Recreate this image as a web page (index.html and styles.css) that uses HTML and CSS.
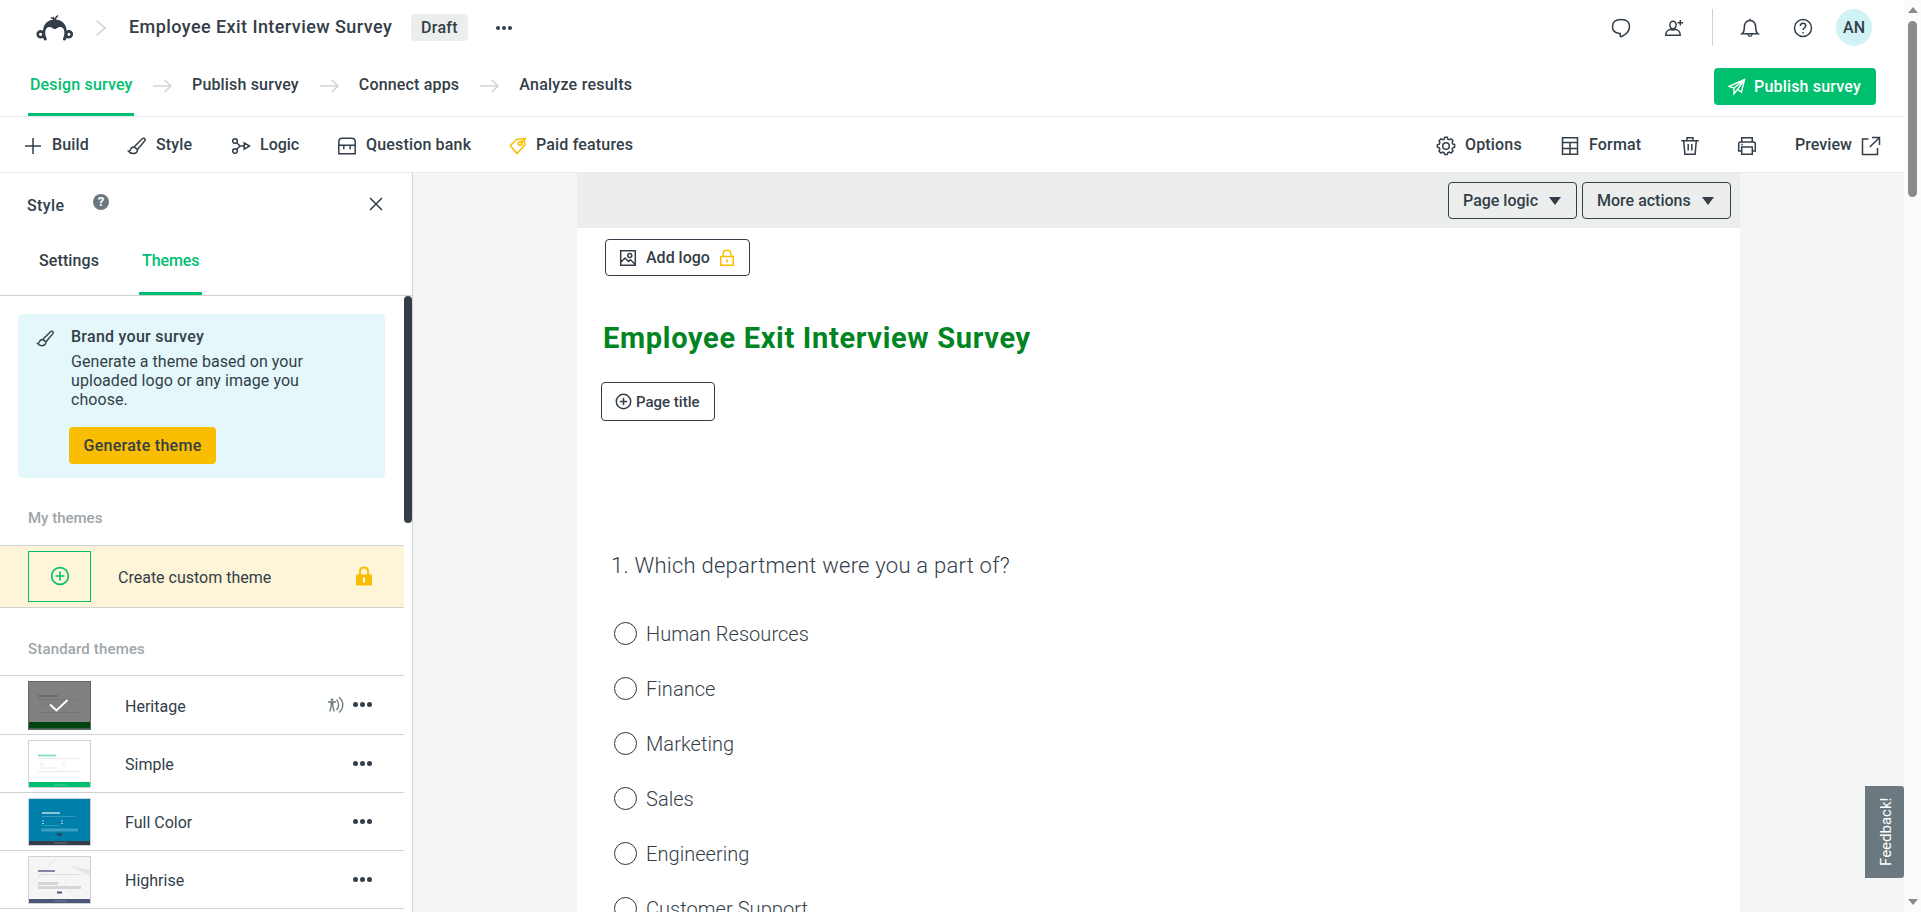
FILE: index.html
```
<!DOCTYPE html>
<html lang="en">

<head>
    <meta charset="UTF-8" />
    <meta name="viewport" content="width=device-width, initial-scale=1.0" />
    <title>Employee Exit Interview Survey</title>
    <link rel="stylesheet" href="styles.css">
</head>

<body>
    <div class="app">
        <header class="topbar">
            <svg class="logo" width="38" height="26" viewBox="0 0 38 26">
                <circle cx="4.600" cy="19.300" r="2.900" fill="none" stroke="#333e48" stroke-width="2.600" />
                <circle cx="32.900" cy="19.300" r="2.900" fill="none" stroke="#333e48" stroke-width="2.600" />
                <path d="M18.800 4.500C12 4.500 7.500 9 7 15.500l-1 6.500c1.200.8 1.800 2 2 3 .5.700 2.500.6 2.700-.5.200-1-.8-2.800-1.200-4.300C8.500 15.500 10.500 12 13.500 12c2.200 0 3.700 2.200 5.300 2.200S22 12 24.200 12c3 0 5 3.500 4 8.200-.4 1.500-1.400 3.300-1.200 4.300.2 1.100 2.200 1.200 2.700.5.200-1 .8-2.200 2-3l-1-6.500c-.5-6.500-5.100-11-11.900-11z" fill="#333e48" />
                <path d="M18.800 6.500c-.5-2.500-2-3.500-4-3.800M18.800 6.500c0-3 1-4.500 3.200-6M17 2c1.300 1.200 1.800 2.700 1.800 4.500" fill="none" stroke="#333e48" stroke-width="1.300" />
            </svg>
            <svg class="crumb" width="12" height="18" viewBox="0 0 12 18"><path d="M1.500 1.500L10 9l-8.500 7.500" fill="none" stroke="#d0d2d3" stroke-width="1.600" /></svg>
            <h1 class="survey-name">Employee Exit Interview Survey</h1>
            <span class="badge">Draft</span>
            <span class="dots small"><i></i><i></i><i></i></span>
            <div class="account">
                <svg width="20" height="20" viewBox="0 0 20 20" class="icon"><path d="M8.500 15.500C3.800 15 1.500 12 1.500 8.500c0-4.500 3.200-7 8.500-7s8.500 2.500 8.500 7c0 4-3.500 8-8 10-.8.300-1.300.2-1.300-.5v-2.500z" /></svg>
                <svg width="20" height="20" viewBox="0 0 20 20" class="icon"><ellipse cx="9" cy="7" rx="3.100" ry="3.800" /><path d="M6.500 11.300C3 12.300 1.800 13.500 1.800 17.300h14.400c0-3.800-1.200-5-4.700-6-1 .8-4 .8-5 0zM16.300 2v5.600M13.500 4.800h5.600" /></svg>
                <span class="divider"></span>
                <svg width="20" height="20" viewBox="0 0 20 20" class="icon"><path d="M2.200 15.700h15.600c-1.500-1-2-2.700-2-5.200 0-5-1.500-8-5.800-8s-5.800 3-5.800 8c0 2.500-.5 4.200-2 5.200zM10 .8v2M8 16.500c.2 1.200 1 1.800 2 1.800s1.800-.6 2-1.800" /></svg>
                <svg width="20" height="20" viewBox="0 0 20 20" class="icon"><circle cx="10" cy="10" r="8.500" /><path d="M7.300 8c0-1.800 1.100-2.800 2.700-2.800s2.700 1 2.700 2.500c0 2-2.600 2.100-2.600 4.300" /><path d="M10 13.900v1.600" /></svg>
                <span class="avatar">AN</span>
            </div>
        </header>

        <nav class="steps">
            <a class="step active">Design survey</a>
            <svg class="arrow" width="20" height="14" viewBox="0 0 20 14"><path d="M0 7h17.500M11.500.8L18 7l-6.500 6.200" /></svg>
            <a class="step">Publish survey</a>
            <svg class="arrow" width="20" height="14" viewBox="0 0 20 14"><path d="M0 7h17.500M11.500.8L18 7l-6.500 6.200" /></svg>
            <a class="step">Connect apps</a>
            <svg class="arrow" width="20" height="14" viewBox="0 0 20 14"><path d="M0 7h17.500M11.500.8L18 7l-6.500 6.200" /></svg>
            <a class="step results">Analyze results</a>
            <button class="publish">
                <svg width="18" height="18" viewBox="0 0 18 18"><path d="M1 8.300L16.500 1.500 13.500 14.200 9.500 11.500 6 15.800V10zM6 10L16.500 1.500 9.500 11.500" /></svg>
                Publish survey
            </button>
        </nav>

        <div class="toolbar">
            <a class="tool build"><svg width="18" height="18" viewBox="0 0 18 18" class="icon"><path d="M9 1v16M1 9h16" /></svg><span>Build</span></a>
            <a class="tool style"><svg width="20" height="18" viewBox="0 0 20 18" class="icon"><path d="M7 10L15.300 1.800c.8-.8 1.900-.8 2.500-.2.600.7.500 1.700-.2 2.500L10.500 12.500zM7 10c-2.300 0-3 1-3.400 2.600-.3 1-1 1.500-2.100 1.600 1.300 1.700 3 2.500 5 2.400 2.500-.2 4-1.900 4-4.100z" /></svg><span>Style</span></a>
            <a class="tool logic"><svg width="20" height="18" viewBox="0 0 20 18" class="icon"><circle cx="4" cy="4" r="2.300" /><circle cx="4" cy="14" r="2.300" /><path d="M5.700 5.700L9 9l-3.300 3.300M9 9h4M13.200 5.800L18.500 9l-5.300 3.200z" /></svg><span>Logic</span></a>
            <a class="tool bank"><svg width="20" height="18" viewBox="0 0 20 18" class="icon"><path d="M1.800 16.700V5c0-2.300 1.200-3.700 3.500-3.700h9.400c2.300 0 3.500 1.400 3.500 3.700v11.700zM1.800 8.200h16.400M6.800 8.500v3.800M13.200 8.500v3.800" /></svg><span>Question bank</span></a>
            <a class="tool paid"><svg width="18" height="18" viewBox="0 0 18 18" class="icon gold"><path d="M1.200 8.500L8 2.300l7.200-.5.600 6.200L8 16.500z" /><circle cx="11.200" cy="6.500" r="1.900" /><path d="M11.500 6.500L17 .8" /></svg><span>Paid features</span></a>
            <div class="tools-right">
                <a class="tool options"><svg width="20" height="20" viewBox="0 0 20 20" class="icon"><path d="M8.200 3.100L8.800 1.200h2.400l.6 1.900 1.500.6 1.800-.9 1.900 1.900-.9 1.800.6 1.500 1.900.6v2.600l-1.900.6-.6 1.500.9 1.800-1.900 1.900-1.800-.9-1.500.6-.6 1.900H8.800l-.6-1.900-1.500-.6-1.800.9L3 15.200l.9-1.800-.6-1.500-1.900-.6V8.700l1.900-.6.600-1.500L3 4.800l1.900-1.900 1.800.8z" /><circle cx="10" cy="10" r="3.300" /></svg><span>Options</span></a>
                <a class="tool format"><svg width="18" height="20" viewBox="0 0 18 20" class="icon"><path d="M1.500 1.700h15v16.600h-15zM1.500 6.500h15M1.500 12.500h15M9 6.500v11.500" /></svg><span>Format</span></a>
                <svg class="icon trash" width="20" height="20" viewBox="0 0 20 20"><path d="M1.200 4.800h17.600M3.700 4.800l1.200 13.500h10.200l1.200-13.500M7 4.500V1.800h6v2.700M8.200 8v6.500M11.800 8v6.500" /></svg>
                <svg class="icon print" width="20" height="20" viewBox="0 0 20 20"><path d="M4.700 6V1.700h10.600V6M4.700 15H1.700V8c0-1.300.7-2 2-2h12.600c1.300 0 2 .7 2 2v7h-3M4.700 11h10.600v7.300H4.700z" /><path d="M4.300 8.600h1.500" /></svg>
                <a class="tool preview"><span>Preview</span><svg width="20" height="20" viewBox="0 0 20 20" class="icon"><path d="M7.500 3H1.500v15.500h15V12M11 1.500h7.500V9M18.300 1.700L8.800 11" /></svg></a>
            </div>
        </div>

        <main class="workspace">
            <aside class="sidebar">
                <div class="panel-head">
                    <span class="panel-title">Style</span>
                    <span class="help">?</span>
                    <svg class="close icon" width="14" height="14" viewBox="0 0 14 14"><path d="M1 1l12 12M13 1L1 13" /></svg>
                </div>
                <div class="tabs">
                    <a class="tab">Settings</a>
                    <a class="tab active">Themes</a>
                </div>
                <div class="panel-scroll">
                    <div class="panel-body">
                        <div class="brand">
                            <svg width="19" height="17" viewBox="0 0 20 18" class="icon"><path d="M7 10L15.300 1.800c.8-.8 1.900-.8 2.500-.2.600.7.500 1.700-.2 2.500L10.500 12.500zM7 10c-2.300 0-3 1-3.400 2.600-.3 1-1 1.500-2.100 1.600 1.300 1.700 3 2.500 5 2.400 2.500-.2 4-1.900 4-4.100z" /></svg>
                            <div class="brand-text">
                                <h2>Brand your survey</h2>
                                <p>Generate a theme based on your<br>uploaded logo or any image you<br>choose.</p>
                                <button class="generate">Generate theme</button>
                            </div>
                        </div>
                        <h3 class="group">My themes</h3>
                        <div class="custom">
                            <span class="custom-box"><svg width="20" height="20" viewBox="0 0 20 20"><circle cx="10" cy="10" r="8.400" /><path d="M10 5.500v9M5.500 10h9" /></svg></span>
                            <span class="custom-name">Create custom theme</span>
                            <svg class="lock" width="16" height="20" viewBox="0 0 16 20"><path d="M4 9V5.500C4 3 5.500 1.500 8 1.500S12 3 12 5.500V9" fill="none" stroke="#f9be00" stroke-width="2" /><rect y="8.500" width="16" height="11" rx="1" fill="#f9be00" /><path d="M8 11.500v5" stroke="#fff" stroke-width="2" /></svg>
                        </div>
                        <h3 class="group standard">Standard themes</h3>
                        <ul class="themes">
                            <li>
                                <svg class="thumb" width="63" height="49" viewBox="0 0 63 49"><rect width="63" height="49" fill="#666" /><rect x="1" y="1" width="61" height="47" fill="#808080" /><path d="M10 15h20" stroke="#3f6b48" stroke-opacity=".7" stroke-width="1.500" /><path d="M10 18.500h40M10 31.500h42M12 24h5" stroke="#767676" /><rect x="1" y="41" width="61" height="6.500" fill="#004510" /><path d="M22 23.500l6.500 6L39.500 19" fill="none" stroke="#fff" stroke-width="2" /></svg>
                                <span class="theme-name">Heritage</span>
                                <svg class="access" width="18" height="18" viewBox="0 0 18 18"><circle cx="5" cy="3.700" r="1.300" fill="#6b787f" stroke="none" /><path d="M1 6h8M4.200 6v4.500l-1.400 5M5.800 6v4.500l1.400 5M4 8h2M9.500 3.500c2.800 2.500 2.800 8 0 10.500M12 1.300c5 4.200 5 11 0 15.200" /></svg>
                                <span class="dots"><i></i><i></i><i></i></span>
                            </li>
                            <li>
                                <svg class="thumb" width="63" height="48" viewBox="0 0 63 48"><rect x=".5" y=".5" width="62" height="47" fill="#fff" stroke="#d0d2d3" /><path d="M10 15.500h18" stroke="#7edfb5" stroke-width="1.700" /><path d="M10 18.500h41M10 31.500h43M12 23.500h4M12 25.500h4M12 28h18M34 23.500h3M34 25.500h3" stroke="#ebebeb" /><rect x="1" y="42" width="61" height="5" fill="#00bf6f" /><path d="M26 45h13" stroke="#43ce94" /></svg>
                                <span class="theme-name">Simple</span>
                                <span class="dots"><i></i><i></i><i></i></span>
                            </li>
                            <li>
                                <svg class="thumb" width="63" height="48" viewBox="0 0 63 48"><rect x=".5" y=".5" width="62" height="47" fill="#007faa" stroke="#d0d2d3" /><path d="M14 15h18" stroke="#bddce8" stroke-width="1.500" /><path d="M14 18.500h33M14 27.500h17" stroke="#3399bb" /><path d="M14 23h2M14 25.500h2M33 23h2M33 25.500h2" stroke="#a9d1e0" /><path d="M13 32h37" stroke="#3c9fc0" stroke-width="3" /><path d="M29 36.500h5" stroke="#333e48" stroke-width="2" /><rect x="1" y="43" width="61" height="4" fill="#333e48" /><path d="M26 45h13" stroke="#66717a" /></svg>
                                <span class="theme-name">Full Color</span>
                                <span class="dots"><i></i><i></i><i></i></span>
                            </li>
                            <li>
                                <svg class="thumb" width="63" height="48" viewBox="0 0 63 48"><rect x=".5" y=".5" width="62" height="47" fill="#f5f5f5" stroke="#d0d2d3" /><path d="M42 10l20 4v6z" fill="#e6e6e6" /><path d="M1 32L28 2M35 20l12 24" stroke="#e9e9e9" /><path d="M10 15h17" stroke="#747b96" stroke-width="1.800" /><path d="M10 18.500h42" stroke="#ddd" /><path d="M10 27.500h20M10 31.500h43" stroke="#d5d5d5" stroke-width="3" /><path d="M29 36.500h5" stroke="#4d5678" stroke-width="2" /><rect x="1" y="43" width="61" height="4" fill="#4d5678" /><path d="M26 45h13" stroke="#737b98" /></svg>
                                <span class="theme-name">Highrise</span>
                                <span class="dots"><i></i><i></i><i></i></span>
                            </li>
                        </ul>
                    </div>
                    <div class="panel-bar"></div>
                </div>
            </aside>

            <section class="canvas">
                <div class="page">
                    <div class="page-actions">
                        <button class="outline page-logic">Page logic<b class="caret"></b></button>
                        <button class="outline more">More actions<b class="caret"></b></button>
                    </div>
                    <div class="page-body">
                        <button class="outline add-logo">
                            <svg width="18" height="18" viewBox="0 0 18 18" class="icon"><path d="M1.700 1.700h14.600v14.600H1.700zM2 13l4-4 3.500 3.500 2-1.800 4.500 4.500" /><circle cx="10.800" cy="6.500" r="2" /></svg>
                            Add logo
                            <svg width="16" height="18" viewBox="0 0 16 18" class="icon gold"><path d="M1.700 7.500h12.600v8.800H1.700zM4.200 7.500V5c0-2.200 1.500-3.700 3.800-3.700S11.800 2.800 11.800 5v2.500M8 10.200v3.300" /></svg>
                        </button>
                        <h2 class="survey-title">Employee Exit Interview Survey</h2>
                        <button class="outline page-title">
                            <svg width="17" height="17" viewBox="0 0 17 17" class="icon"><circle cx="8.500" cy="8.500" r="7.200" /><path d="M8.500 4.800v7.400M4.800 8.500h7.400" /></svg>
                            Page title
                        </button>
                        <h3 class="question">1. Which department were you a part of?</h3>
                        <ul class="answers">
                            <li><span class="radio"></span>Human Resources</li>
                            <li><span class="radio"></span>Finance</li>
                            <li><span class="radio"></span>Marketing</li>
                            <li><span class="radio"></span>Sales</li>
                            <li><span class="radio"></span>Engineering</li>
                            <li><span class="radio"></span>Customer Support</li>
                        </ul>
                    </div>
                </div>
            </section>
        </main>
    </div>
    <div class="scrollbar"><span class="up"></span><span class="bar"></span><span class="down"></span></div>
    <div class="feedback">Feedback!</div>
</body>

</html>
```
FILE: styles.css
```
* {
    margin: 0;
    padding: 0;
    box-sizing: border-box;
}

body {
    width: 1921px;
    height: 912px;
    overflow: hidden;
    display: flex;
    background-color: #fff;
    font-family: Roboto, sans-serif;
    font-size: 16px;
    color: #333e48;
}

ul {
    list-style: none;
}

button {
    font-family: inherit;
    font-size: 16px;
    font-weight: 500;
    color: #333e48;
    background: none;
    border: none;
    border-radius: 4px;
    display: flex;
    align-items: center;
}

.icon {
    fill: none;
    stroke: #333e48;
    stroke-width: 1.5;
    flex: none;
}

.icon.gold {
    stroke: #f9be00;
}

.app {
    width: 1904px;
    height: 912px;
    display: flex;
    flex-direction: column;
}

/* top bar */
.topbar {
    height: 55px;
    flex: none;
    display: flex;
    align-items: center;
    padding: 0 32px 0 36px;
}

.crumb {
    margin-left: 21px;
}

.survey-name {
    width: 282px;
    margin: -2px 0 0 22px;
    font-size: 18px;
    font-weight: 500;
    letter-spacing: 0.43px;
    white-space: nowrap;
}

.badge {
    width: 57px;
    height: 27px;
    border-radius: 4px;
    background-color: #eceeed;
    font-weight: 500;
    letter-spacing: 0.3px;
    display: flex;
    align-items: center;
    justify-content: center;
}

.dots {
    display: flex;
    gap: 2px;
}

.dots i {
    width: 5px;
    height: 5px;
    border-radius: 50%;
    background-color: #333e48;
}

.dots.small {
    margin-left: 28px;
}

.dots.small i {
    width: 4px;
    height: 4px;
}

.account {
    margin-left: auto;
    display: flex;
    align-items: center;
}

.account .icon:nth-child(2) {
    margin-left: 33px;
}

.divider {
    width: 1px;
    height: 37px;
    margin: 0 27px 0 28px;
    background-color: #d0d2d3;
}

.account .icon:nth-child(5) {
    margin-left: 33px;
}

.avatar {
    width: 36px;
    height: 37px;
    margin-left: 23px;
    border-radius: 50%;
    background-color: #d1f3f5;
    font-weight: 500;
    display: flex;
    align-items: center;
    justify-content: center;
}

/* steps */
.steps {
    height: 62px;
    flex: none;
    display: flex;
    align-items: center;
    padding: 0 28px;
    border-bottom: 1px solid #eaebec;
}

.step {
    height: 61px;
    padding: 20px 2px 0;
    font-weight: 500;
    letter-spacing: 0.17px;
    line-height: 20px;
    white-space: nowrap;
    border-bottom: 3px solid transparent;
}

.step.active {
    width: 106px;
    color: #00bf6f;
    border-bottom-color: #00bf6f;
}

.step.results {
    letter-spacing: 0.25px;
}

.arrow {
    margin: 0 17px 0 19px;
    fill: none;
    stroke: #d0d2d3;
    stroke-width: 1.5;
}

.publish {
    width: 162px;
    height: 37px;
    margin: 2px 0 0 auto;
    padding-left: 14px;
    gap: 8px;
    background-color: #00bf6f;
    color: #fff;
    letter-spacing: 0.18px;
}

.publish svg {
    fill: none;
    stroke: #fff;
    stroke-width: 1.4;
}

/* toolbar */
.toolbar {
    height: 56px;
    flex: none;
    display: flex;
    align-items: center;
    padding: 2px 23px 0 24px;
    border-bottom: 1px solid #eaebec;
}

.tool {
    display: flex;
    align-items: center;
    gap: 9px;
    font-weight: 500;
    letter-spacing: 0.17px;
    white-space: nowrap;
}

.tool span {
    margin-top: -2px;
}

.build {
    width: 103px;
    gap: 10px;
}

.style {
    width: 104px;
}

.logic {
    width: 106px;
    letter-spacing: 0;
}

.bank {
    width: 172px;
}

.tools-right {
    margin-left: auto;
    display: flex;
    align-items: center;
}

.options {
    width: 125px;
}

.format {
    width: 119px;
    gap: 10px;
}

.trash {
    margin-right: 37px;
}

.print {
    margin-right: 38px;
}

.preview {
    width: 86px;
    justify-content: space-between;
    letter-spacing: 0.05px;
}

/* sidebar */
.workspace {
    flex: 1;
    min-height: 0;
    display: flex;
}

.sidebar {
    width: 413px;
    flex: none;
    border-right: 1px solid #d0d2d3;
    display: flex;
    flex-direction: column;
}

.panel-head {
    height: 65px;
    flex: none;
    display: flex;
    align-items: center;
    padding: 0 29px 0 27px;
}

.panel-title {
    width: 38px;
    font-weight: 500;
    letter-spacing: 0.4px;
}

.help {
    width: 16px;
    height: 16px;
    margin: -7px 0 0 28px;
    border-radius: 50%;
    background-color: #6b787f;
    color: #fff;
    font-size: 13px;
    font-weight: 700;
    line-height: 16px;
    text-align: center;
}

.close {
    margin: -3px 0 0 auto;
}

.tabs {
    height: 58px;
    flex: none;
    display: flex;
    gap: 37px;
    padding-left: 36px;
    border-bottom: 1px solid #d0d2d3;
}

.tab {
    width: 66px;
    padding: 13px 3px 0;
    font-weight: 500;
    letter-spacing: 0.1px;
    line-height: 20px;
    border-bottom: 3px solid transparent;
}

.tab.active {
    width: 63px;
    color: #00bf6f;
    letter-spacing: -0.1px;
    border-bottom-color: #00bf6f;
}

.panel-scroll {
    flex: 1;
    min-height: 0;
    display: flex;
}

.panel-body {
    width: 404px;
}

.panel-bar {
    width: 8px;
    height: 227px;
    border-radius: 4px;
    background-color: #333e48;
}

.brand {
    width: 367px;
    height: 164px;
    margin: 18px 0 0 18px;
    padding: 14px 18px;
    border-radius: 4px;
    background-color: #e4f8fb;
    display: flex;
    gap: 16px;
}

.brand > .icon {
    margin-top: 2px;
}

.brand-text h2 {
    font-size: 16px;
    font-weight: 500;
    letter-spacing: 0.27px;
    line-height: 18px;
    margin-bottom: 6px;
}

.brand-text p {
    line-height: 19px;
    letter-spacing: 0.06px;
    white-space: nowrap;
}

.generate {
    width: 147px;
    height: 37px;
    margin: 18px 0 0 -2px;
    background-color: #f9be00;
    letter-spacing: 0.28px;
    justify-content: center;
}

.group {
    height: 67px;
    padding: 30px 0 0 28px;
    font-size: 15px;
    font-weight: 500;
    line-height: 20px;
    color: #9da5aa;
}

.group.standard {
    padding-top: 31px;
    letter-spacing: 0.16px;
}

.custom {
    height: 63px;
    padding: 0 32px 0 28px;
    border-top: 1px solid #d0d2d3;
    border-bottom: 1px solid #d0d2d3;
    background-color: #fef5d8;
    display: flex;
    align-items: center;
}

.custom-box {
    width: 63px;
    height: 51px;
    margin-top: -1px;
    border: 1px solid #00bf6f;
    display: flex;
    align-items: center;
    justify-content: center;
}

.custom-box svg {
    fill: none;
    stroke: #00bf6f;
    stroke-width: 1.6;
}

.custom-name {
    margin-left: 27px;
    padding-top: 1px;
}

.lock {
    margin: -1px 0 0 auto;
}

.themes {
    border-top: 1px solid #d0d2d3;
}

.themes li {
    height: 58px;
    padding: 0 32px 0 28px;
    border-bottom: 1px solid #d0d2d3;
    display: flex;
    align-items: center;
}

.themes li:first-child {
    height: 59px;
}

.theme-name {
    margin-left: 34px;
    padding-top: 2px;
}

.themes .dots {
    margin: -1px 0 0 auto;
}

.access {
    margin-left: auto;
    fill: none;
    stroke: #6b787f;
    stroke-width: 1.3;
}

.themes .access + .dots {
    margin-left: 8px;
}

/* survey page */
.canvas {
    flex: 1;
    padding: 0 164px;
    background-color: #f4f6f5;
}

.page {
    height: 100%;
    background-color: #fff;
}

.page-actions {
    height: 55px;
    padding: 9px 9px 0 0;
    background-color: #eceeed;
    display: flex;
    justify-content: flex-end;
    gap: 5px;
}

.outline {
    height: 37px;
    padding: 0 14px;
    border: 1px solid #333e48;
    gap: 11px;
    white-space: nowrap;
}

.page-logic {
    width: 129px;
}

.more {
    width: 149px;
}

.caret {
    border: 6px solid transparent;
    border-top: 8px solid #333e48;
    border-bottom: 0;
}

.page-body {
    height: 684px;
    padding: 11px 24px 0;
    overflow: hidden;
}

.add-logo {
    width: 145px;
    margin-left: 4px;
    padding: 0 13px;
    gap: 9px;
}

.survey-title {
    margin: 42px 0 0 2px;
    font-size: 29px;
    font-weight: 700;
    letter-spacing: 0.68px;
    line-height: 40px;
    color: #008522;
}

.page-title {
    width: 114px;
    height: 39px;
    margin-top: 24px;
    padding: 0 13px;
    gap: 4px;
    font-size: 15px;
}

.question {
    margin: 129px 0 0 10px;
    font-size: 22px;
    font-weight: 300;
    letter-spacing: 0.24px;
    line-height: 32px;
}

.answers {
    margin: 24px 0 0 13px;
}

.answers li {
    height: 55px;
    display: flex;
    align-items: center;
    gap: 9px;
    font-size: 20px;
    font-weight: 300;
    letter-spacing: 0.05px;
}

.radio {
    width: 23px;
    height: 23px;
    border: 1px solid #333;
    border-radius: 50%;
}

/* window scrollbar */
.scrollbar {
    width: 17px;
    background-color: #fcfcfc;
    display: flex;
    flex-direction: column;
    align-items: center;
}

.up,
.down {
    border: 5px solid transparent;
}

.up {
    margin-top: 7px;
    border-top: 0;
    border-bottom: 6px solid #8b8b8b;
}

.bar {
    width: 9px;
    height: 176px;
    margin-top: 8px;
    border-radius: 5px;
    background-color: #8b8b8b;
}

.down {
    margin: auto 0 7px;
    border-bottom: 0;
    border-top: 6px solid #8b8b8b;
}

.feedback {
    position: absolute;
    left: 1865px;
    top: 786px;
    width: 39px;
    height: 92px;
    border-radius: 3px 0 0 3px;
    background-color: #6b787f;
    color: #fff;
    font-size: 15px;
    line-height: 43px;
    text-align: center;
    writing-mode: vertical-rl;
    transform: rotate(180deg);
}
```
